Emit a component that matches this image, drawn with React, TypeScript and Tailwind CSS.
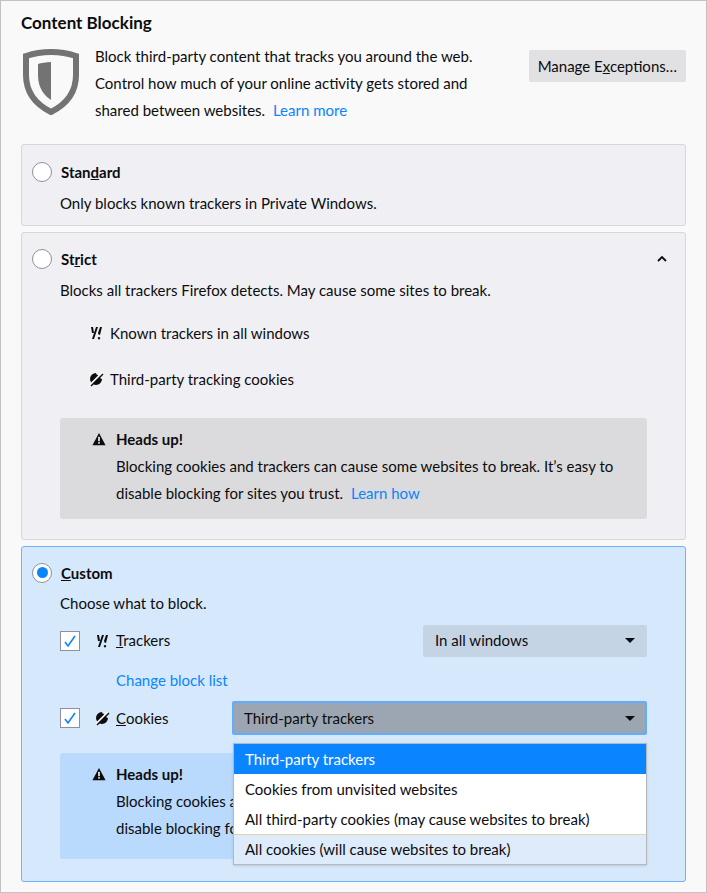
import React from 'react';

const TrackerIcon = () => (
  <svg width="16" height="16" viewBox="0 0 16 16" className="shrink-0">
    <path d="M3 2h2l1 6H4zM8 2h2L6 14H4z" fill="#0c0c0d" />
    <path d="M10 8l2-6h2l-2 8c-1 0-2-1-2-2z M11 12a1.2 1.2 0 1 0 0.01 0z" fill="#0c0c0d" />
  </svg>
);

const CookieIcon = () => (
  <svg width="16" height="16" viewBox="0 0 16 16" className="shrink-0">
    <path d="M8 2a6 6 0 1 0 6 6 2 2 0 0 1-2-2 2 2 0 0 1-2-2 2 2 0 0 1-2-2z" fill="#0c0c0d" />
    <path d="M2 14L14 2" stroke="#f9f9fa" strokeWidth="2" />
    <path d="M3 15L15 3" stroke="#0c0c0d" strokeWidth="1.4" />
  </svg>
);

const Warn = () => (
  <svg width="14" height="14" viewBox="0 0 16 16" className="shrink-0">
    <path d="M8 1L15.5 15H0.5z" fill="#0c0c0d" />
    <rect x="7.1" y="5.5" width="1.8" height="5" fill="#fff" />
    <rect x="7.1" y="11.5" width="1.8" height="1.8" fill="#fff" />
  </svg>
);

const Radio = ({ on }: { on?: boolean }) => (
  <div className="w-[20px] h-[20px] rounded-full border border-[#8f8f9d] bg-white flex items-center justify-center shrink-0">
    {on && <div className="w-[11px] h-[11px] rounded-full bg-[#0a84ff]" />}
  </div>
);

const Check = () => (
  <div className="w-[20px] h-[20px] border border-[#8f8f9d] bg-white flex items-center justify-center shrink-0">
    <svg width="14" height="14" viewBox="0 0 14 14"><path d="M2 8l3 4 7-10" stroke="#0a84ff" strokeWidth="1.6" fill="none" /></svg>
  </div>
);

const Caret = () => <span className="w-0 h-0 border-x-[5px] border-x-transparent border-t-[5px] border-t-[#0c0c0d]" />;

export default function App() {
  return (
    <div className="w-[707px] h-[893px] bg-[#f9f9fa] border border-[#c2c2c2] text-[#0c0c0d] text-[15px] relative overflow-hidden" style={{ fontFamily: 'Lato, "Noto Sans", sans-serif' }}>
      <div className="px-[20px] pt-[10px]">
        <h1 className="text-[17px] font-bold leading-[24px]">Content Blocking</h1>
        <div className="flex mt-[12px] gap-[14px]">
          <svg width="60" height="66" viewBox="0 0 60 66" className="shrink-0 mt-[2px]">
            <path d="M30 3C20 3 11 5 5 7v19c0 20 13 31 25 37 12-6 25-17 25-37V7C49 5 40 3 30 3z" fill="none" stroke="#737373" strokeWidth="6" />
            <path d="M30 13c-5 0-10 1-13 2v11c0 14 7 21 13 25z" fill="#737373" />
          </svg>
          <p className="leading-[27px] flex-1 -mt-[4px]">
            Block third-party content that tracks you around the web.<br />
            Control how much of your online activity gets stored and<br />
            shared between websites. <a className="text-[#0a84ff] ml-1">Learn more</a>
          </p>
          <button className="self-start mt-[3px] h-[32px] px-[9px] bg-[#e1e1e3] rounded-[2px]">Manage E<u>x</u>ceptions…</button>
        </div>

        <div className="mt-[20px] border border-[#d7d7db] bg-[#f0f0f4] rounded-[3px] px-[10px] pt-[16px] pb-[11px]">
          <div className="flex items-center gap-[9px]"><Radio /><span className="font-bold">Stan<u>d</u>ard</span></div>
          <p className="ml-[28px] mt-[8px]">Only blocks known trackers in Private Windows.</p>
        </div>

        <div className="mt-[6px] border border-[#d7d7db] bg-[#f0f0f4] rounded-[3px] px-[10px] pt-[15px] pb-[20px]">
          <div className="flex items-center gap-[9px]"><Radio /><span className="font-bold flex-1">St<u>r</u>ict</span>
            <svg width="10" height="8" viewBox="0 0 10 8" className="mr-[8px]"><path d="M1 6l4-4 4 4" stroke="#0c0c0d" strokeWidth="1.8" fill="none" /></svg>
          </div>
          <p className="ml-[28px] mt-[8px]">Blocks all trackers Firefox detects. May cause some sites to break.</p>
          <div className="ml-[56px] mt-[21px] flex items-center gap-[6px]"><TrackerIcon />Known trackers in all windows</div>
          <div className="ml-[56px] mt-[23px] flex items-center gap-[6px]"><CookieIcon />Third-party tracking cookies</div>
          <div className="ml-[28px] mr-[28px] mt-[28px] bg-[#dbdbdd] rounded-[3px] pl-[32px] pr-[20px] pt-[10px] pb-[12px]">
            <div className="flex items-center gap-[10px] font-bold"><Warn />Heads up!</div>
            <p className="ml-[24px] mt-[2px] leading-[27px]">Blocking cookies and trackers can cause some websites to break. It’s easy to disable blocking for sites you trust. <a className="text-[#0a84ff] ml-1">Learn how</a></p>
          </div>
        </div>

        <div className="mt-[6px] border border-[#6fb2ff] bg-[#d6e8fc] rounded-[3px] px-[10px] pt-[15px] pb-[20px] h-[336px]">
          <div className="flex items-center gap-[9px]"><Radio on /><span className="font-bold"><u>C</u>ustom</span></div>
          <p className="ml-[28px] mt-[8px]">Choose what to block.</p>
          <div className="ml-[28px] mr-[28px] mt-[10px] flex items-center">
            <Check /><span className="ml-[14px]"><TrackerIcon /></span><span className="ml-[6px] flex-1"><u>T</u>rackers</span>
            <div className="w-[224px] h-[32px] bg-[#c5d4e4] rounded-[2px] flex items-center justify-between px-[12px]">In all windows<Caret /></div>
          </div>
          <a className="block ml-[84px] mt-[12px] text-[#0a84ff]">Change block list</a>
          <div className="ml-[28px] mr-[28px] mt-[10px] flex items-center">
            <Check /><span className="ml-[14px]"><CookieIcon /></span><span className="ml-[6px] w-[116px]"><u>C</u>ookies</span>
            <div className="flex-1 h-[34px] bg-[#9ba6b2] border-2 border-[#61adff] rounded-[2px] flex items-center justify-between px-[10px]">Third-party trackers<Caret /></div>
          </div>
          <div className="ml-[28px] mr-[28px] mt-[18px] bg-[#b9d9fd] rounded-[3px] pl-[32px] pr-[20px] pt-[10px] pb-[12px] h-[106px]">
            <div className="flex items-center gap-[10px] font-bold"><Warn />Heads up!</div>
            <p className="ml-[24px] mt-[2px] leading-[27px]">Blocking cookies and trackers can cause some websites to break. It’s easy to disable blocking for sites you trust.</p>
          </div>
        </div>
      </div>

      <div className="absolute left-[232px] top-[742px] w-[414px] bg-white border border-[#b8b8b8] shadow">
        <div className="h-[30px] bg-[#0a84ff] text-white px-[11px] flex items-center">Third-party trackers</div>
        <div className="h-[30px] px-[11px] flex items-center">Cookies from unvisited websites</div>
        <div className="h-[30px] px-[11px] flex items-center">All third-party cookies (may cause websites to break)</div>
        <div className="h-[30px] px-[11px] flex items-center bg-[#ddebfb] border-t border-[#e0d4a8]">All cookies (will cause websites to break)</div>
      </div>
    </div>
  );
}
